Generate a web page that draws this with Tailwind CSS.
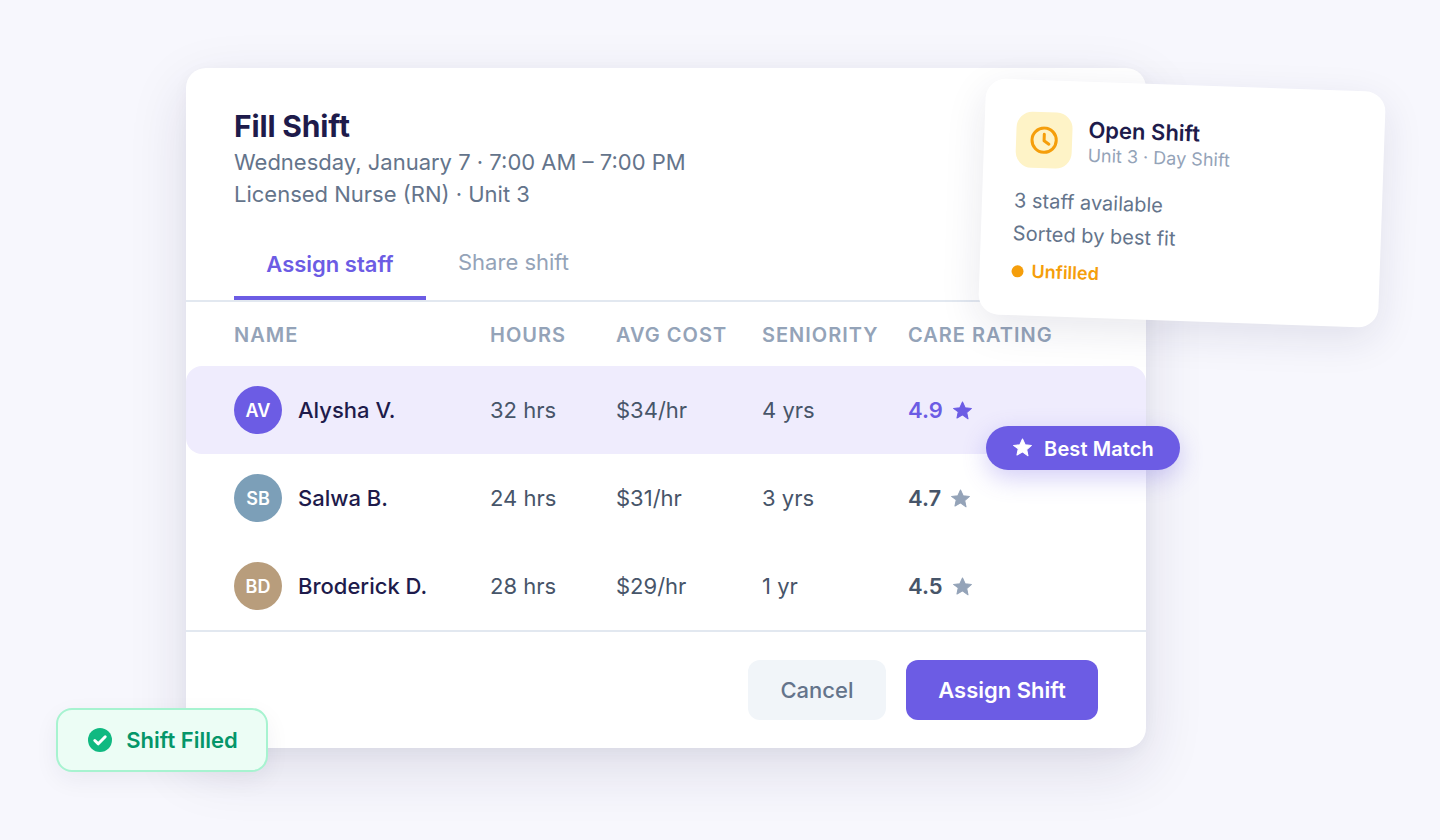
<!DOCTYPE html>
<html lang="en">
<head>
<meta charset="utf-8">
<title>Fill Shift</title>
<script src="https://cdn.jsdelivr.net/npm/@tailwindcss/browser@4"></script>
</head>
<body class="m-0">
<div class="relative w-[1440px] h-[840px] overflow-hidden bg-[#f7f7fd] pt-[68px] pl-[186px] font-['Inter',sans-serif] antialiased">
  <div class="w-[960px] h-[680px] flex flex-col rounded-[20px] bg-white shadow-[0_20px_60px_rgba(30,27,75,0.12),0_4px_16px_rgba(30,27,75,0.04)]">
    <div class="h-[234px] px-12 pt-[40px] shrink-0 border-b-2 border-[#e2e8f0] flex flex-col">
      <h1 class="text-[30px] leading-[36px] font-bold tracking-[-0.005em] text-[#1e1b4b]">Fill Shift</h1>
      <p class="mt-[2px] text-[22px] leading-[32px] text-[#64748b]">Wednesday, January 7 · 7:00 AM – 7:00 PM</p>
      <p class="text-[22px] leading-[32px] text-[#64748b]">Licensed Nurse (RN) · Unit 3</p>
      <div class="mt-[34px] flex items-start gap-8">
        <div class="w-[192px] h-[56px] flex justify-center pt-[4px] border-b-4 border-[#6c5ce4] text-[22px] leading-[32px] font-semibold text-[#6c5ce4]">Assign staff</div>
        <div class="pt-[2px] text-[22px] leading-[32px] text-[#94a3b8]">Share shift</div>
      </div>
    </div>
    <div class="h-[64px] shrink-0 px-12 pt-[2px] grid grid-cols-[256px_126px_146px_146px_1fr] items-center text-[20px] font-semibold tracking-[0.05em] text-[#94a3b8]">
      <div>NAME</div><div>HOURS</div><div>AVG COST</div><div>SENIORITY</div><div>CARE RATING</div>
    </div>
    <div class="h-[88px] shrink-0 px-12 rounded-2xl bg-[#efecfd] grid grid-cols-[256px_126px_146px_146px_1fr] items-center text-[22px] text-[#475569]">
      <div class="flex items-center gap-4"><div class="w-12 h-12 rounded-full bg-[#6c5ce4] flex items-center justify-center text-[18px] font-semibold text-white">AV</div><span class="font-medium text-[#1e1b4b]">Alysha V.</span></div>
      <div>32 hrs</div><div>$34/hr</div><div>4 yrs</div>
      <div class="flex items-center gap-[9px] font-semibold text-[#6c5ce4]">4.9<svg class="w-[21px] h-[21px]" viewBox="0 0 24 24" fill="currentColor" stroke="currentColor" stroke-width="1.2" stroke-linejoin="round"><path d="M12 2.2l3 6.6 7.2.8-5.4 4.8 1.5 7.1L12 17l-6.3 3.5 1.5-7.1L1.8 9.6 9 8.8z"/></svg></div>
    </div>
    <div class="h-[88px] shrink-0 px-12 grid grid-cols-[256px_126px_146px_146px_1fr] items-center text-[22px] text-[#475569]">
      <div class="flex items-center gap-4"><div class="w-12 h-12 rounded-full bg-[#7c9fb8] flex items-center justify-center text-[18px] font-semibold text-white">SB</div><span class="font-medium text-[#1e1b4b]">Salwa B.</span></div>
      <div>24 hrs</div><div>$31/hr</div><div>3 yrs</div>
      <div class="flex items-center gap-[9px] font-semibold text-[#475569]">4.7<svg class="w-[21px] h-[21px] text-[#94a3b8]" viewBox="0 0 24 24" fill="currentColor" stroke="currentColor" stroke-width="1.2" stroke-linejoin="round"><path d="M12 2.2l3 6.6 7.2.8-5.4 4.8 1.5 7.1L12 17l-6.3 3.5 1.5-7.1L1.8 9.6 9 8.8z"/></svg></div>
    </div>
    <div class="h-[88px] shrink-0 px-12 grid grid-cols-[256px_126px_146px_146px_1fr] items-center text-[22px] text-[#475569]">
      <div class="flex items-center gap-4"><div class="w-12 h-12 rounded-full bg-[#b89d7c] flex items-center justify-center text-[18px] font-semibold text-white">BD</div><span class="font-medium text-[#1e1b4b]">Broderick D.</span></div>
      <div>28 hrs</div><div>$29/hr</div><div>1 yr</div>
      <div class="flex items-center gap-[9px] font-semibold text-[#475569]">4.5<svg class="w-[21px] h-[21px] text-[#94a3b8]" viewBox="0 0 24 24" fill="currentColor" stroke="currentColor" stroke-width="1.2" stroke-linejoin="round"><path d="M12 2.2l3 6.6 7.2.8-5.4 4.8 1.5 7.1L12 17l-6.3 3.5 1.5-7.1L1.8 9.6 9 8.8z"/></svg></div>
    </div>
    <div class="flex-1 border-t-2 border-[#e2e8f0] px-12 pt-7 flex justify-end gap-5">
      <div class="w-[138px] h-[60px] rounded-xl bg-[#f1f5f9] flex items-center justify-center text-[22px] font-medium text-[#64748b]">Cancel</div>
      <div class="w-[192px] h-[60px] rounded-xl bg-[#6c5ce4] flex items-center justify-center text-[22px] font-semibold text-white">Assign Shift</div>
    </div>
  </div>

  <div class="absolute left-[982px] top-[85px] w-[400px] h-[236px] rotate-2 rounded-[20px] bg-white p-8 shadow-[0_12px_40px_rgba(30,27,75,0.1)]">
    <div class="flex items-center gap-4">
      <div class="w-14 h-14 rounded-2xl bg-[#fef3c7] flex items-center justify-center">
        <svg class="w-7 h-7 text-[#f59e0b]" viewBox="0 0 24 24" fill="none" stroke="currentColor" stroke-width="2.6" stroke-linecap="round" stroke-linejoin="round"><circle cx="12" cy="12" r="10.4"/><path d="M12 7v5.5l4.2 2.8"/></svg>
      </div>
      <div>
        <div class="text-[22px] leading-[28px] font-semibold text-[#1e1b4b]">Open Shift</div>
        <div class="text-[18px] leading-[24px] text-[#94a3b8]">Unit 3 · Day Shift</div>
      </div>
    </div>
    <p class="mt-[17px] text-[20px] leading-[32px] text-[#64748b]">3 staff available</p>
    <p class="mt-px text-[20px] leading-[32px] text-[#64748b]">Sorted by best fit</p>
    <div class="mt-2 flex items-center gap-2 text-[18px] leading-[28px] font-semibold text-[#f59e0b]"><span class="w-3 h-3 rounded-full bg-[#f59e0b]"></span>Unfilled</div>
  </div>

  <div class="absolute left-[986px] top-[426px] w-[194px] h-[44px] rounded-full bg-[#6c5ce4] flex items-center justify-center gap-[11px] text-[20px] font-semibold tracking-[0.005em] text-white shadow-[0_8px_24px_rgba(108,92,228,0.3)]">
    <svg class="w-[21px] h-[21px] -mt-[2px]" viewBox="0 0 24 24" fill="currentColor" stroke="currentColor" stroke-width="1.2" stroke-linejoin="round"><path d="M12 2.2l3 6.6 7.2.8-5.4 4.8 1.5 7.1L12 17l-6.3 3.5 1.5-7.1L1.8 9.6 9 8.8z"/></svg>
    <span class="mt-[2px]">Best Match</span>
  </div>

  <div class="absolute left-[56px] top-[708px] w-[212px] h-[64px] rounded-2xl border-2 border-[#a7f3d0] bg-[#ecfdf5] pl-[2px] flex items-center justify-center gap-[14px] text-[22px] font-semibold text-[#059669] shadow-[0_8px_24px_rgba(30,27,75,0.06)]">
    <svg class="w-6 h-6" viewBox="0 0 24 24"><circle cx="12" cy="12" r="12" fill="#10b981"/><path d="M6.8 12.5l3.5 3.3 6.9-7" fill="none" stroke="#fff" stroke-width="3" stroke-linecap="round" stroke-linejoin="round"/></svg>
    Shift Filled
  </div>
</div>
</body>
</html>
